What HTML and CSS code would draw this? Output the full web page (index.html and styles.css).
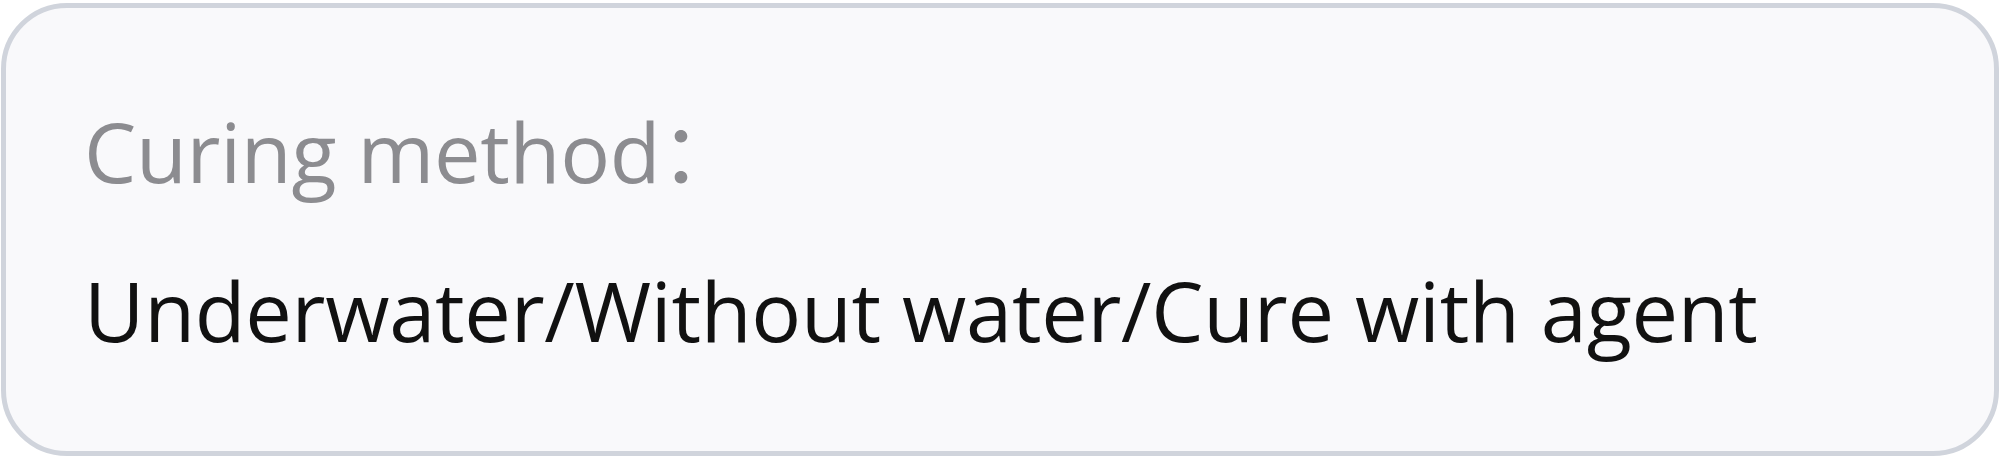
FILE: index.html
```html
<!DOCTYPE html>
<html lang="en">
<head>
<meta charset="utf-8">
<link rel="stylesheet" href="styles.css">
</head>
<body>
<div class="card">
  <div class="label">Curing method：</div>
  <div class="value">Underwater/Without water/Cure with agent</div>
</div>
</body>
</html>
```
FILE: styles.css
```css
html, body {
  margin: 0;
  padding: 0;
  background: #ffffff;
}
body {
  padding: 3px 1px 7px 1px;
  font-family: "Open Sans", "Noto Sans CJK SC", sans-serif;
}
.card {
  box-sizing: border-box;
  height: 453px;
  border: 5px solid #d0d4dc;
  border-radius: 66px;
  background: #f9f9fb;
  padding: 84px 0 0 78px;
  display: flex;
  flex-direction: column;
  gap: 41px;
}
.label {
  font-size: 83px;
  line-height: 118px;
  letter-spacing: -0.3px;
  color: #8c8c90;
}
.value {
  font-size: 83px;
  line-height: 118px;
  letter-spacing: -0.3px;
  color: #111111;
}
```
